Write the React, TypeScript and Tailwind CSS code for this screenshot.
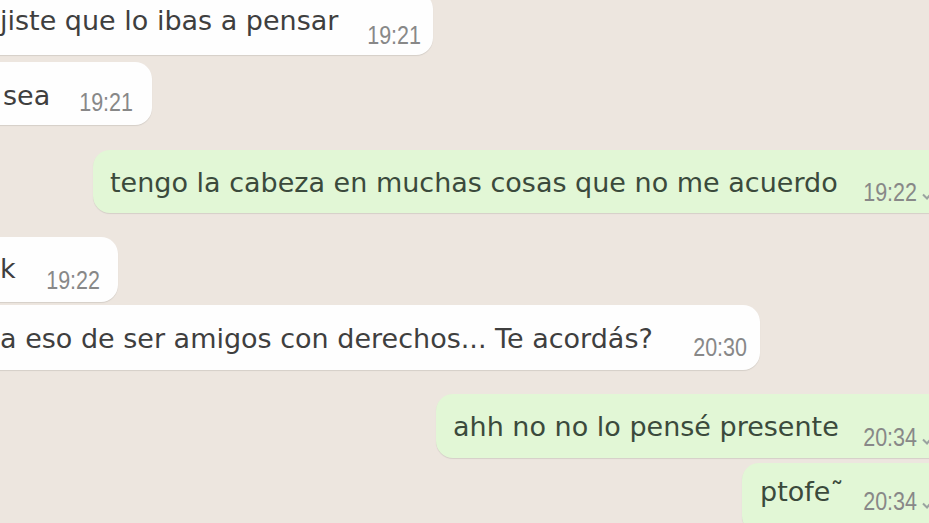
import { ReactNode } from "react";

// chat bubbles, cropped photo of a whatsapp thread
const textFont = "font-['DejaVu_Sans','Noto_Sans',sans-serif] text-[27px] leading-none";
const timeFont =
  "font-['Liberation_Sans',sans-serif] text-[21.5px] leading-none text-[#888888] origin-bottom scale-y-[1.2]";

function Ticks() {
  return (
    <svg width="24" height="16" viewBox="0 0 24 16" className="ml-[5px] mb-[4px] shrink-0">
      <path d="M1 8.5 L5 12.5 L13 3" fill="none" stroke="#9aa3a0" strokeWidth="2" />
      <path d="M8 12.5 L9 13.5 L18 3" fill="none" stroke="#9aa3a0" strokeWidth="2" />
    </svg>
  );
}

function Row({ end, className, children }: { end?: boolean; className: string; children: ReactNode }) {
  return <div className={`flex ${end ? "justify-end" : "justify-start"} ${className}`}>{children}</div>;
}

export default function App() {
  return (
    <div className="w-[929px] h-[523px] overflow-hidden bg-[#ede6df] flex flex-col">
      {/* 1 */}
      <Row className="-mt-[8px]">
        <div className="-ml-[30px] w-[463px] h-[63px] bg-[#fefefe] rounded-[17px] shadow-[0_1px_1px_rgba(0,0,0,0.1)] flex items-end pl-[30px] pr-[12px] pb-[6px]">
          <span className={`${textFont} text-[#3f3f3f] mb-[15px]`}>jiste que lo ibas a pensar</span>
          <span className={`${timeFont} ml-auto`}>19:21</span>
        </div>
      </Row>

      {/* 2 */}
      <Row className="mt-[7px]">
        <div className="-ml-[30px] w-[182px] h-[63px] bg-[#fefefe] rounded-[17px] shadow-[0_1px_1px_rgba(0,0,0,0.1)] flex items-end pl-[33px] pr-[19px] pb-[9px]">
          <span className={`${textFont} text-[#3f3f3f] mb-[7px]`}>sea</span>
          <span className={`${timeFont} ml-auto`}>19:21</span>
        </div>
      </Row>

      {/* 3 */}
      <Row end className="mt-[25px]">
        <div className="-mr-[31px] w-[867px] h-[63px] bg-[#e2f7d6] rounded-[17px] shadow-[0_1px_1px_rgba(0,0,0,0.1)] flex items-end pl-[17px] pr-[14px] pb-[7px]">
          <span className={`${textFont} text-[#3b4a3c] mb-[10px]`}>tengo la cabeza en muchas cosas que no me acuerdo</span>
          <span className={`${timeFont} ml-auto`}>19:22</span>
          <Ticks />
        </div>
      </Row>

      {/* 4 */}
      <Row className="mt-[24px]">
        <div className="-ml-[30px] w-[148px] h-[65px] bg-[#fefefe] rounded-[17px] shadow-[0_1px_1px_rgba(0,0,0,0.1)] flex items-end pl-[30px] pr-[18px] pb-[8px]">
          <span className={`${textFont} text-[#3f3f3f] mb-[12px]`}>k</span>
          <span className={`${timeFont} ml-auto`}>19:22</span>
        </div>
      </Row>

      {/* 5 */}
      <Row className="mt-[3px]">
        <div className="-ml-[30px] w-[790px] h-[65px] bg-[#fefefe] rounded-[17px] shadow-[0_1px_1px_rgba(0,0,0,0.1)] flex items-end pl-[30px] pr-[13px] pb-[9px]">
          <span className={`${textFont} text-[#3f3f3f] mb-[9px]`}>a eso de ser amigos con derechos... Te acordás?</span>
          <span className={`${timeFont} ml-auto`}>20:30</span>
        </div>
      </Row>

      {/* 6 */}
      <Row end className="mt-[24px]">
        <div className="-mr-[31px] w-[524px] h-[64px] bg-[#e2f7d6] rounded-[17px] shadow-[0_1px_1px_rgba(0,0,0,0.1)] flex items-end pl-[17px] pr-[14px] pb-[7px]">
          <span className={`${textFont} text-[#3b4a3c] mb-[11px]`}>ahh no no lo pensé presente</span>
          <span className={`${timeFont} ml-auto`}>20:34</span>
          <Ticks />
        </div>
      </Row>

      {/* 7 */}
      <Row end className="mt-[5px]">
        <div className="-mr-[31px] w-[218px] h-[70px] bg-[#e2f7d6] rounded-[17px] shadow-[0_1px_1px_rgba(0,0,0,0.1)] flex items-end pl-[18px] pr-[14px] pb-[18px]">
          <span className={`${textFont} text-[#3b4a3c] mb-[10px]`}>ptofe˜</span>
          <span className={`${timeFont} ml-auto`}>20:34</span>
          <Ticks />
        </div>
      </Row>
    </div>
  );
}
